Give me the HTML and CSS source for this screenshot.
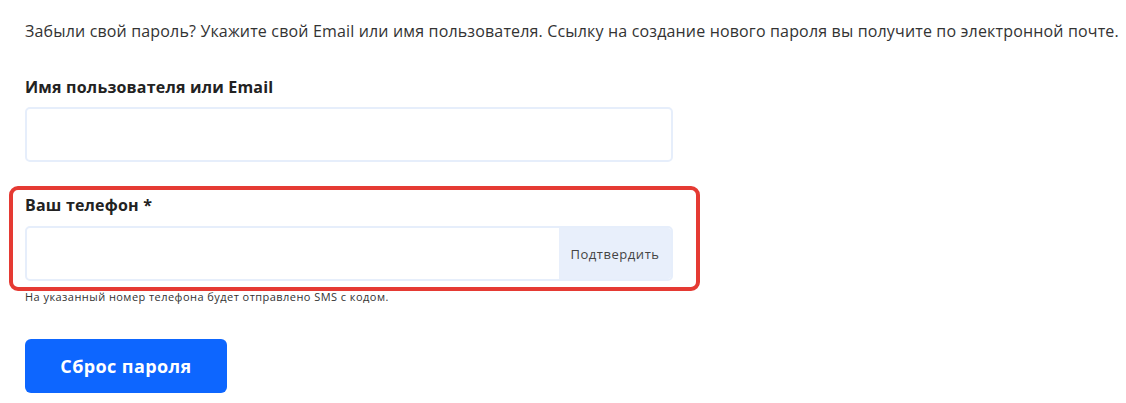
FILE: index.html
```html
<!DOCTYPE html>
<html lang="ru">
<head>
<meta charset="utf-8">
<link rel="stylesheet" href="styles.css">
</head>
<body>
<div class="page">
  <p class="intro">Забыли свой пароль? Укажите свой Email или имя пользователя. Ссылку на создание нового пароля вы получите по электронной почте.</p>
  <div class="field field-first">
    <label class="label">Имя пользователя или Email</label>
    <div class="input"></div>
  </div>
  <div class="field field-phone">
    <label class="label">Ваш телефон *</label>
    <div class="input input-group">
      <div class="input-fill"></div>
      <div class="addon">Подтвердить</div>
    </div>
  </div>
  <div class="help">На указанный номер телефона будет отправлено SMS с кодом.</div>
  <button class="submit">Сброс пароля</button>
</div>
</body>
</html>
```
FILE: styles.css
```css
html, body { margin: 0; padding: 0; background: #fff; }
body { font-family: "Open Sans", "Noto Sans", sans-serif; color: #333; }
.page { padding: 19px 0 0 25px; }
.intro { margin: 0; font-size: 16px; line-height: 24px; color: #333; white-space: nowrap; letter-spacing: 0.16px; }
.field { position: relative; width: 648px; }
.field-first { margin-top: 32px; }
.field-phone { margin-top: 31px; }
.field-phone::after {
  content: ""; position: absolute; left: -16px; top: -7px; width: 683px; height: 97px;
  border: 4px solid #e53a33; border-radius: 9px; pointer-events: none;
}
.label { display: block; font-size: 16px; line-height: 24px; font-weight: 700; color: #222; margin-bottom: 8px; letter-spacing: 0.2px; }
.field-phone .label { margin-bottom: 9px; }
.input { box-sizing: border-box; height: 55px; border: 2px solid #e6eefb; border-radius: 5px; background: #fff; }
.input-group { display: flex; overflow: hidden; }
.input-fill { flex: 1; }
.addon { display: flex; align-items: center; justify-content: center; width: 112px; background: #e8effb; font-size: 13px; color: #444; letter-spacing: 0.55px; }
.help { margin-top: 8px; font-size: 11px; line-height: 16px; color: #333; letter-spacing: 0.45px; }
.submit {
  display: block; margin-top: 34px; width: 202px; height: 54px; border: 0; border-radius: 6px;
  background: #0d66ff; color: #fff; font-family: inherit; font-size: 18px; font-weight: 700; padding: 0; letter-spacing: 0.4px;
}
```
